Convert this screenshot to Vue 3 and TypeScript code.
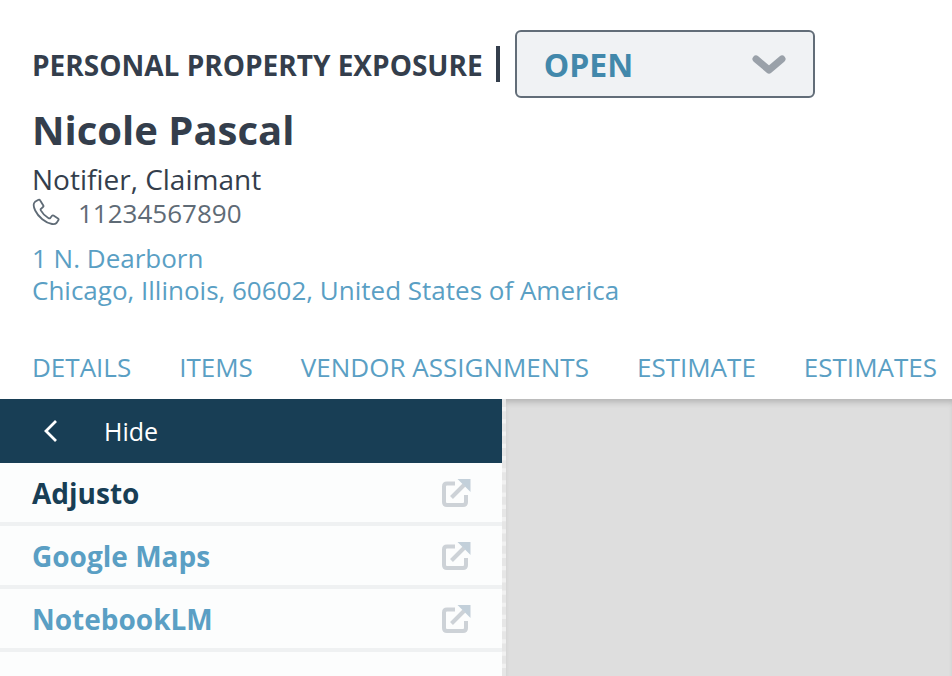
<script setup lang="ts">
const tabs: string[] = ['DETAILS', 'ITEMS', 'VENDOR ASSIGNMENTS', 'ESTIMATE', 'ESTIMATES']

interface ToolLink {
  name: string
  active?: boolean
}

const links: ToolLink[] = [
  { name: 'Adjusto', active: true },
  { name: 'Google Maps' },
  { name: 'NotebookLM' }
]
</script>

<template>
  <div class="page">
    <header class="head">
      <div class="title-row">
        <span class="exposure">PERSONAL PROPERTY EXPOSURE</span>
        <span class="bar"></span>
        <div class="status">
          <span class="status-text">OPEN</span>
          <svg class="chev" width="34" height="20" viewBox="0 0 34 20">
            <path d="M4 4 L17 15 L30 4" fill="none" stroke="#9aa1a9" stroke-width="7" stroke-linecap="round" stroke-linejoin="round" />
          </svg>
        </div>
      </div>
      <h1 class="name">Nicole Pascal</h1>
      <div class="role">Notifier, Claimant</div>
      <div class="phone">
        <svg class="phone-icon" width="28" height="28" viewBox="0 0 28 28">
          <path d="M6.500 1.800 L3 3.800 C1.300 5.300 1.300 8.500 3.200 12.500 C6.200 18.800 13.500 25 20 26 C22 26.300 23.500 26 24.500 25 L26.500 22 C26.800 21.300 26.600 20.800 26 20.400 L21.500 17.500 C20.900 17.200 20.400 17.300 20 17.800 L18.300 20 C17.800 20.500 17.200 20.500 16.600 20.200 C13.500 18.500 10.500 15.500 8.800 12.400 C8.500 11.800 8.500 11.200 9 10.800 L11 9 C11.500 8.600 11.600 8 11.300 7.500 L8.200 2.500 C7.800 1.800 7.200 1.500 6.500 1.800 Z" fill="none" stroke="#5f6b76" stroke-width="1.800" stroke-linejoin="round" />
        </svg>
        <span>11234567890</span>
      </div>
      <div class="address">
        <div>1 N. Dearborn</div>
        <div>Chicago, Illinois, 60602, United States of America</div>
      </div>
    </header>

    <nav class="tabs">
      <span v-for="tab in tabs" :key="tab" class="tab">{{ tab }}</span>
    </nav>

    <div class="body">
      <aside class="side">
        <div class="hide-bar">
          <svg class="back" width="14" height="24" viewBox="0 0 14 24">
            <path d="M12 2 L2 12 L12 22" fill="none" stroke="#fff" stroke-width="2.800" />
          </svg>
          <span>Hide</span>
        </div>
        <div v-for="link in links" :key="link.name" class="link-row">
          <span class="link-name" :class="{ active: link.active }">{{ link.name }}</span>
          <svg class="ext" width="30" height="30" viewBox="0 0 30 30">
            <path d="M14 5.500 H6 Q3 5.500 3 8.500 V24 Q3 27 6 27 H22 Q25 27 25 24 V17" fill="none" stroke="#cdd2d7" stroke-width="4" />
            <path d="M10.500 19.500 L23 7" fill="none" stroke="#cdd2d7" stroke-width="4" />
            <path d="M16.500 1 H29.500 V14 Z" fill="#c3d0da" />
          </svg>
        </div>
      </aside>
      <main class="content"></main>
    </div>
  </div>
</template>

<style scoped>
.page {
  width: 952px;
  height: 676px;
  overflow: hidden;
  display: flex;
  flex-direction: column;
  background: #fff;
  font-family: "Open Sans", "Liberation Sans", sans-serif;
}

.head {
  padding: 30px 0 0 32px;
}

.title-row {
  display: flex;
  align-items: center;
  height: 68px;
  white-space: nowrap;
}

.exposure {
  font-size: 28px;
  font-weight: 700;
  color: #343e4c;
  margin-top: 2px;
}

.bar {
  width: 4px;
  height: 36px;
  background: #343e4c;
  margin: 0 15px 0 13px;
}

.status {
  width: 300px;
  height: 68px;
  box-sizing: border-box;
  border: 2px solid #626d78;
  border-radius: 6px;
  background: #f0f2f4;
  display: flex;
  align-items: center;
  justify-content: space-between;
  padding: 0 27px 0 27px;
}

.status-text {
  font-size: 32px;
  font-weight: 700;
  color: #4288ab;
}

.chev {
  margin-top: 1px;
}

.name {
  margin: 6px 0 0;
  font-size: 40px;
  line-height: 52px;
  font-weight: 700;
  color: #343e4c;
}

.role {
  margin-top: 4px;
  font-size: 28px;
  line-height: 38px;
  color: #343e4c;
}

.phone {
  display: flex;
  align-items: center;
  height: 30px;
  font-size: 26px;
  color: #5f6b76;
}

.phone-icon {
  margin-right: 18px;
  margin-top: -3px;
}

.address {
  margin-top: 14px;
  font-size: 26px;
  line-height: 32px;
  color: #5a9fc4;
}

.tabs {
  display: flex;
  gap: 48px;
  padding: 0 0 14px 32px;
  height: 93px;
  box-sizing: border-box;
  align-items: flex-end;
  font-size: 26px;
  color: #5a9fc4;
  white-space: nowrap;
}

.body {
  flex: 1;
  display: flex;
  min-height: 0;
  background: #f1f1f1;
}

.side {
  width: 502px;
  background: #fcfdfd;
  flex-shrink: 0;
}

.hide-bar {
  height: 64px;
  background: #183e55;
  color: #fff;
  display: flex;
  align-items: center;
  font-size: 25px;
  padding-left: 44px;
  box-sizing: border-box;
}

.back {
  margin-right: 46px;
}

.link-row {
  height: 63px;
  box-sizing: border-box;
  border-bottom: 4px solid #eff1f2;
  display: flex;
  align-items: center;
  justify-content: space-between;
  padding: 0 31px 0 32px;
}

.link-name {
  font-size: 28px;
  font-weight: 700;
  color: #5a9fc4;
}

.link-name.active {
  color: #183e55;
}

.content {
  flex: 1;
  background: #dedede;
  background-clip: padding-box;
  border-left: 4px dashed #e6e6e6;
  box-shadow: inset 0 6px 6px -3px rgba(0, 0, 0, 0.2);
}
</style>
